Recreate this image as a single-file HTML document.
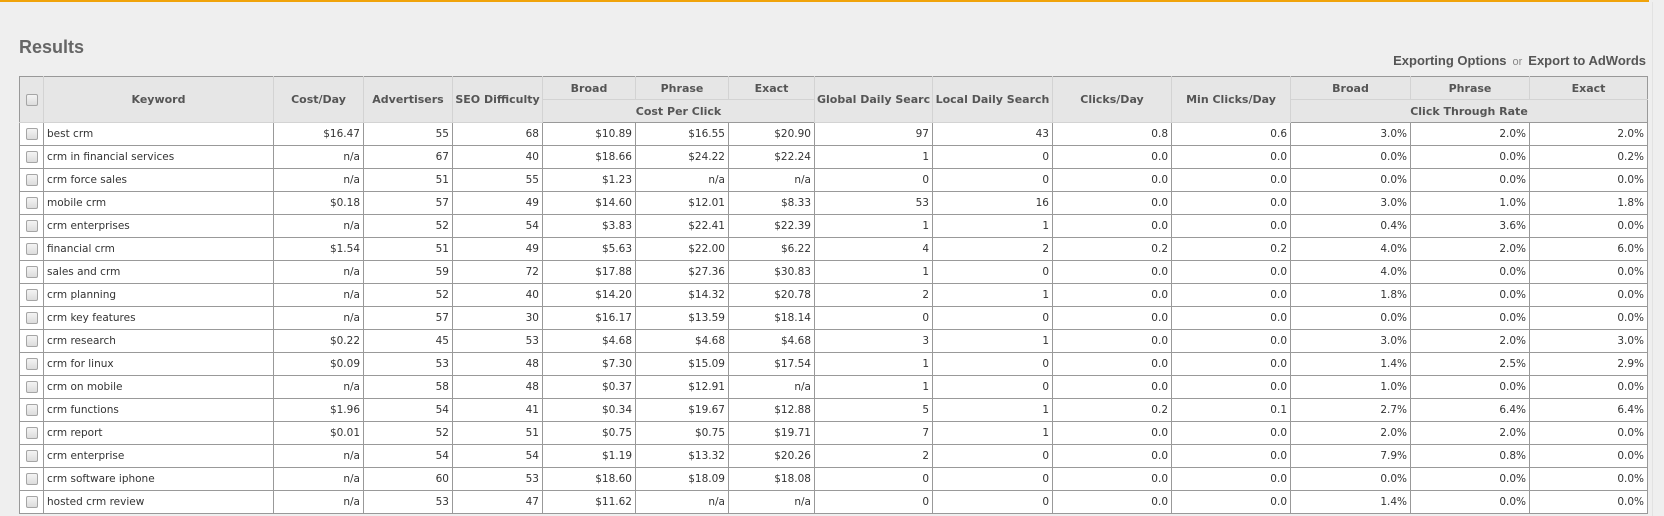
<!DOCTYPE html>
<html><head><meta charset="utf-8"><style>
html,body{margin:0;padding:0}
body{width:1664px;height:516px;overflow:hidden;background:#efefef;position:relative;font-family:"DejaVu Sans","Liberation Sans",sans-serif}
.top{position:absolute;left:0;top:0;width:1649px;height:2px;background:#f0a30a}
.edge{position:absolute;left:1652px;top:2px;width:1px;height:514px;background:#e2e2e2}
h1{position:absolute;left:19px;top:37px;margin:0;font:bold 18px "Liberation Sans",Arial,sans-serif;color:#666}
.exp{position:absolute;right:18px;top:53px;font:bold 13px "Liberation Sans",Arial,sans-serif;color:#555;white-space:nowrap}
.exp span{font-weight:normal;font-size:11px;color:#888;margin:0 6px}
table{position:absolute;left:19px;top:76px;border-collapse:collapse;table-layout:fixed;width:1629px;font-size:10.5px}
th{background:#e6e6e6;color:#555;font-weight:bold;font-size:11px;height:22px;padding:0 2px;border:1px solid #d3d3d3;white-space:nowrap;overflow:hidden}
thead tr:first-child th{border-top:1px solid #999}
th:first-child{border-left:1px solid #999}
th:last-child{border-right:1px solid #999}
thead tr:last-child th{border-bottom:1px solid #999}
td{height:22px;border:1px solid #999;background:#fff;color:#333;text-align:right;padding:0 3px;white-space:nowrap;overflow:hidden}
td:nth-child(2){text-align:left}
td:first-child{text-align:center;padding:0}
.cb{display:inline-block;width:10px;height:10px;border:1px solid #a5a5a5;border-radius:2px;background:linear-gradient(#f4f4f4,#dcdcdc);vertical-align:middle}
</style></head><body>
<div class="top"></div><div class="edge"></div>
<h1>Results</h1>
<div class="exp">Exporting Options<span>or</span>Export to AdWords</div>
<table>
<colgroup><col style="width:24px"><col style="width:230px"><col style="width:90px"><col style="width:89px"><col style="width:90px"><col style="width:93px"><col style="width:93px"><col style="width:86px"><col style="width:118px"><col style="width:120px"><col style="width:119px"><col style="width:119px"><col style="width:120px"><col style="width:119px"><col style="width:118px"></colgroup>
<thead>
<tr><th rowspan="2"><span class="cb"></span></th><th rowspan="2">Keyword</th><th rowspan="2">Cost/Day</th><th rowspan="2">Advertisers</th><th rowspan="2">SEO Difficulty</th><th>Broad</th><th>Phrase</th><th>Exact</th><th rowspan="2">Global Daily Searc</th><th rowspan="2">Local Daily Search</th><th rowspan="2">Clicks/Day</th><th rowspan="2">Min Clicks/Day</th><th>Broad</th><th>Phrase</th><th>Exact</th></tr>
<tr><th colspan="3">Cost Per Click</th><th colspan="3">Click Through Rate</th></tr>
</thead>
<tbody>
<tr><td><span class="cb"></span></td><td>best crm</td><td>$16.47</td><td>55</td><td>68</td><td>$10.89</td><td>$16.55</td><td>$20.90</td><td>97</td><td>43</td><td>0.8</td><td>0.6</td><td>3.0%</td><td>2.0%</td><td>2.0%</td></tr>
<tr><td><span class="cb"></span></td><td>crm in financial services</td><td>n/a</td><td>67</td><td>40</td><td>$18.66</td><td>$24.22</td><td>$22.24</td><td>1</td><td>0</td><td>0.0</td><td>0.0</td><td>0.0%</td><td>0.0%</td><td>0.2%</td></tr>
<tr><td><span class="cb"></span></td><td>crm force sales</td><td>n/a</td><td>51</td><td>55</td><td>$1.23</td><td>n/a</td><td>n/a</td><td>0</td><td>0</td><td>0.0</td><td>0.0</td><td>0.0%</td><td>0.0%</td><td>0.0%</td></tr>
<tr><td><span class="cb"></span></td><td>mobile crm</td><td>$0.18</td><td>57</td><td>49</td><td>$14.60</td><td>$12.01</td><td>$8.33</td><td>53</td><td>16</td><td>0.0</td><td>0.0</td><td>3.0%</td><td>1.0%</td><td>1.8%</td></tr>
<tr><td><span class="cb"></span></td><td>crm enterprises</td><td>n/a</td><td>52</td><td>54</td><td>$3.83</td><td>$22.41</td><td>$22.39</td><td>1</td><td>1</td><td>0.0</td><td>0.0</td><td>0.4%</td><td>3.6%</td><td>0.0%</td></tr>
<tr><td><span class="cb"></span></td><td>financial crm</td><td>$1.54</td><td>51</td><td>49</td><td>$5.63</td><td>$22.00</td><td>$6.22</td><td>4</td><td>2</td><td>0.2</td><td>0.2</td><td>4.0%</td><td>2.0%</td><td>6.0%</td></tr>
<tr><td><span class="cb"></span></td><td>sales and crm</td><td>n/a</td><td>59</td><td>72</td><td>$17.88</td><td>$27.36</td><td>$30.83</td><td>1</td><td>0</td><td>0.0</td><td>0.0</td><td>4.0%</td><td>0.0%</td><td>0.0%</td></tr>
<tr><td><span class="cb"></span></td><td>crm planning</td><td>n/a</td><td>52</td><td>40</td><td>$14.20</td><td>$14.32</td><td>$20.78</td><td>2</td><td>1</td><td>0.0</td><td>0.0</td><td>1.8%</td><td>0.0%</td><td>0.0%</td></tr>
<tr><td><span class="cb"></span></td><td>crm key features</td><td>n/a</td><td>57</td><td>30</td><td>$16.17</td><td>$13.59</td><td>$18.14</td><td>0</td><td>0</td><td>0.0</td><td>0.0</td><td>0.0%</td><td>0.0%</td><td>0.0%</td></tr>
<tr><td><span class="cb"></span></td><td>crm research</td><td>$0.22</td><td>45</td><td>53</td><td>$4.68</td><td>$4.68</td><td>$4.68</td><td>3</td><td>1</td><td>0.0</td><td>0.0</td><td>3.0%</td><td>2.0%</td><td>3.0%</td></tr>
<tr><td><span class="cb"></span></td><td>crm for linux</td><td>$0.09</td><td>53</td><td>48</td><td>$7.30</td><td>$15.09</td><td>$17.54</td><td>1</td><td>0</td><td>0.0</td><td>0.0</td><td>1.4%</td><td>2.5%</td><td>2.9%</td></tr>
<tr><td><span class="cb"></span></td><td>crm on mobile</td><td>n/a</td><td>58</td><td>48</td><td>$0.37</td><td>$12.91</td><td>n/a</td><td>1</td><td>0</td><td>0.0</td><td>0.0</td><td>1.0%</td><td>0.0%</td><td>0.0%</td></tr>
<tr><td><span class="cb"></span></td><td>crm functions</td><td>$1.96</td><td>54</td><td>41</td><td>$0.34</td><td>$19.67</td><td>$12.88</td><td>5</td><td>1</td><td>0.2</td><td>0.1</td><td>2.7%</td><td>6.4%</td><td>6.4%</td></tr>
<tr><td><span class="cb"></span></td><td>crm report</td><td>$0.01</td><td>52</td><td>51</td><td>$0.75</td><td>$0.75</td><td>$19.71</td><td>7</td><td>1</td><td>0.0</td><td>0.0</td><td>2.0%</td><td>2.0%</td><td>0.0%</td></tr>
<tr><td><span class="cb"></span></td><td>crm enterprise</td><td>n/a</td><td>54</td><td>54</td><td>$1.19</td><td>$13.32</td><td>$20.26</td><td>2</td><td>0</td><td>0.0</td><td>0.0</td><td>7.9%</td><td>0.8%</td><td>0.0%</td></tr>
<tr><td><span class="cb"></span></td><td>crm software iphone</td><td>n/a</td><td>60</td><td>53</td><td>$18.60</td><td>$18.09</td><td>$18.08</td><td>0</td><td>0</td><td>0.0</td><td>0.0</td><td>0.0%</td><td>0.0%</td><td>0.0%</td></tr>
<tr><td><span class="cb"></span></td><td>hosted crm review</td><td>n/a</td><td>53</td><td>47</td><td>$11.62</td><td>n/a</td><td>n/a</td><td>0</td><td>0</td><td>0.0</td><td>0.0</td><td>1.4%</td><td>0.0%</td><td>0.0%</td></tr>
</tbody></table>
</body></html>
